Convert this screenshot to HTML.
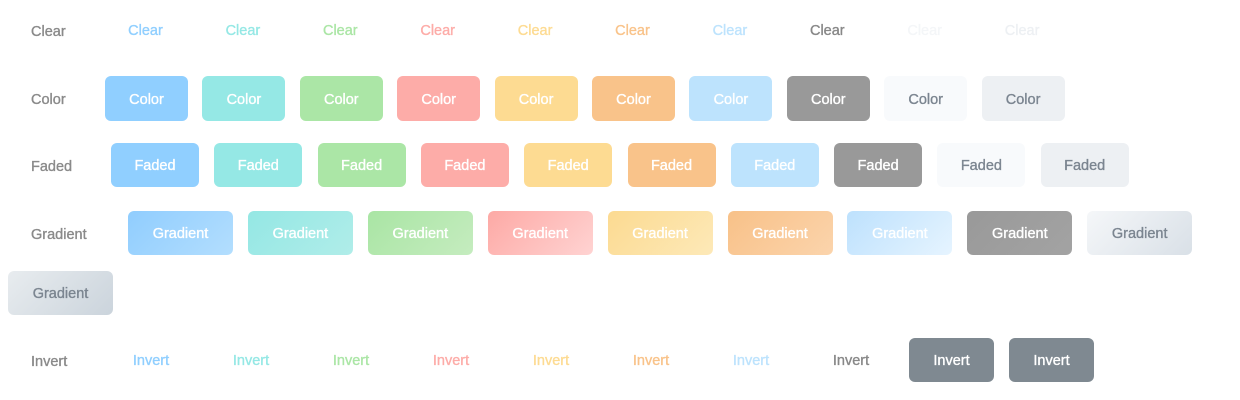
<!DOCTYPE html>
<html><head><meta charset="utf-8"><style>
body{margin:0;width:1240px;height:400px;background:#fff;position:relative;font-family:"Liberation Sans",sans-serif;font-size:14.5px;overflow:hidden;-webkit-text-stroke:0.35px currentColor}
.b{position:absolute;display:flex;align-items:center;justify-content:center;border-radius:6px;color:#fff;box-sizing:border-box;padding-top:2px}
.l{position:absolute;color:#8a8a8a;display:flex;align-items:center;height:44px;padding-top:2px}
</style></head><body>
<div class="l" style="left:31px;top:8px">Clear</div>
<div class="l" style="left:31px;top:76px">Color</div>
<div class="l" style="left:31px;top:143px">Faded</div>
<div class="l" style="left:31px;top:211px">Gradient</div>
<div class="l" style="left:31px;top:338px">Invert</div>
<script>
const c=['#90cfff','#95e8e5','#abe6a6','#fdaca8','#fddb92','#f9c38a','#bde3fd','#999999','#f8fafc','#edf0f3'];
const tc=i=>i>=8?'#7b8590':'#fff';
const g=[['#90cdfe','#b3defe'],['#94e7e4','#b0ede9'],['#a9e5a4','#c5ecbf'],['#fda9a5','#ffd3d2'],['#fcda91','#fde9b8'],['#f8c188','#fbd4ac'],['#bde1fd','#e6f4ff'],['#999','#a3a3a3'],['#f5f7f9','#d9e0e7'],['#e8ecef','#cbd4dc']];
let h='';
const clr=['#90cfff','#95e8e5','#abe6a6','#fdaca8','#fddb92','#f9c38a','#bde3fd','#888','#f4f6f8','#edf0f3'];
for(let i=0;i<10;i++){
 h+=`<div class="b" style="left:${105+i*97.4}px;top:8px;width:81px;height:44px;color:${clr[i]}">Clear</div>`;
 h+=`<div class="b" style="left:${105+i*97.4}px;top:76px;width:83px;height:45px;background:${c[i]};color:${tc(i)}">Color</div>`;
 h+=`<div class="b" style="left:${111+i*103.3}px;top:143px;width:88px;height:44px;background:${c[i]};color:${tc(i)}">Faded</div>`;
 const gx=i<9?128+i*119.9:8, gy=i<9?211:271;
 h+=`<div class="b" style="left:${gx}px;top:${gy}px;width:105px;height:44px;background:linear-gradient(135deg,${g[i][0]},${g[i][1]});color:${tc(i)}">Gradient</div>`;
 if(i<8) h+=`<div class="b" style="left:${108.5+i*100}px;top:338px;width:85px;height:44px;color:${clr[i]}">Invert</div>`;
 else h+=`<div class="b" style="left:${109+i*100}px;top:338px;width:85px;height:44px;background:#7f8991">Invert</div>`;
}
document.write(h);
</script>
</body></html>
